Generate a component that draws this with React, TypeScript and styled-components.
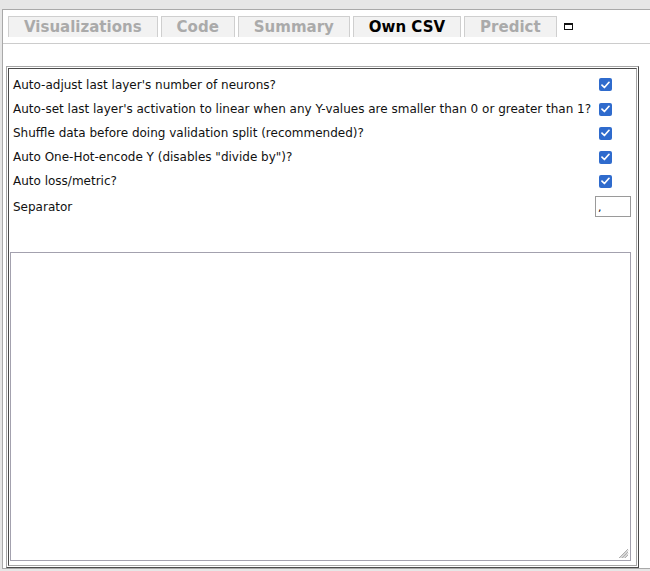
import React from "react";
import styled, { createGlobalStyle } from "styled-components";

const Global = createGlobalStyle`
  html, body { margin: 0; padding: 0; background: #e6e6e6; }
  body { font-family: "DejaVu Sans", "Liberation Sans", sans-serif; }
  * { box-sizing: border-box; }
`;

const Window = styled.div`
  margin: 9px 0 0 2px;
  height: 560px;
  background: #ffffff;
  border: 1px solid #a9a9a9;
  border-right: none;
  display: flex;
  flex-direction: column;
`;

const TabBar = styled.div`
  height: 27px;
  padding: 6px 0 0 5px;
  display: flex;
  align-items: flex-start;
  gap: 3px;
`;

const Tab = styled.div<{ $active?: boolean }>`
  height: 21px;
  padding: 0 15px;
  background: #f2f2f2;
  border: 1px solid #cfcfcf;
  border-bottom: none;
  font-family: "DejaVu Sans", sans-serif;
  font-weight: bold;
  font-size: 15px;
  line-height: 20px;
  color: ${(p) => (p.$active ? "#000" : "#aaaaaa")};
  white-space: nowrap;
`;

const MaxIcon = styled.span`
  display: block;
  width: 9px;
  height: 7px;
  margin: 7px 0 0 4px;
  border: 1px solid #111;
  border-top-width: 2px;
`;

const Divider = styled.div`
  margin-top: 6px;
  border-top: 1px solid #cccccc;
`;

const PanelOuter = styled.div`
  margin: 22px 11px 0 3px;
  height: 502px;
  padding: 1px;
  border: 1px solid;
  border-color: #a6a6a6 #4a4a4a #4a4a4a #a6a6a6;
`;

const PanelInner = styled.div`
  height: 100%;
  border: 1px solid;
  border-color: #4a4a4a #a6a6a6 #a6a6a6 #4a4a4a;
  padding: 3px 5px 4px 0;
  display: flex;
  flex-direction: column;
`;

const OptionGrid = styled.div`
  display: grid;
  grid-template-columns: 1fr 36px;
  grid-template-rows: 25px;
  grid-auto-rows: 24px;
  padding-left: 4px;
`;

const Label = styled.div`
  font-size: 12px;
  color: #111;
  display: flex;
  align-items: center;
  white-space: nowrap;
`;

const Control = styled.div`
  display: flex;
  align-items: center;
`;

const Check = styled.span`
  width: 13px;
  height: 13px;
  margin-left: 4px;
  border-radius: 2px;
  background: #2f6bcd;
  display: flex;
  align-items: center;
  justify-content: center;
`;

const SepRow = styled.div`
  display: grid;
  grid-template-columns: 1fr 36px;
  height: 27px;
  padding-left: 4px;
`;

const SepInput = styled.div`
  width: 36px;
  height: 21px;
  margin-top: 3px;
  border: 1px solid #9a9a9a;
  font-size: 11px;
  padding: 4px 0 0 2px;
  color: #000;
`;

const TextArea = styled.div`
  margin: 32px 0 0 1px;
  width: 621px;
  height: 309px;
  border: 1px solid #a3a1ae;
  position: relative;
`;

const Grip = styled.svg`
  position: absolute;
  right: 1px;
  bottom: 1px;
`;

const options = [
  "Auto-adjust last layer's number of neurons?",
  "Auto-set last layer's activation to linear when any Y-values are smaller than 0 or greater than 1?",
  "Shuffle data before doing validation split (recommended)?",
  'Auto One-Hot-encode Y (disables "divide by")?',
  "Auto loss/metric?",
];

const CheckBox = () => (
  <Check>
    <svg width="9" height="8" viewBox="0 0 9 8">
      <path d="M1 4.2 L3.4 6.5 L8 1.3" fill="none" stroke="#fff" strokeWidth="1.7" strokeLinecap="round" strokeLinejoin="round" />
    </svg>
  </Check>
);

export default function App() {
  return (
    <>
      <Global />
      <Window>
        <TabBar>
          <Tab>Visualizations</Tab>
          <Tab>Code</Tab>
          <Tab>Summary</Tab>
          <Tab $active>Own CSV</Tab>
          <Tab>Predict</Tab>
          <MaxIcon />
        </TabBar>
        <Divider />
        <PanelOuter>
          <PanelInner>
            <OptionGrid>
              {options.map((o) => (
                <React.Fragment key={o}>
                  <Label>{o}</Label>
                  <Control>
                    <CheckBox />
                  </Control>
                </React.Fragment>
              ))}
            </OptionGrid>
            <SepRow>
              <Label>Separator</Label>
              <SepInput>,</SepInput>
            </SepRow>
            <TextArea>
              <Grip width="12" height="12" viewBox="0 0 12 12">
                <path d="M11 2 L2 11 M11 5 L5 11 M11 8 L8 11 M11 3.5 L3.5 11 M11 6.5 L6.5 11" stroke="#9a9a9a" strokeWidth="0.8" />
              </Grip>
            </TextArea>
          </PanelInner>
        </PanelOuter>
      </Window>
    </>
  );
}
